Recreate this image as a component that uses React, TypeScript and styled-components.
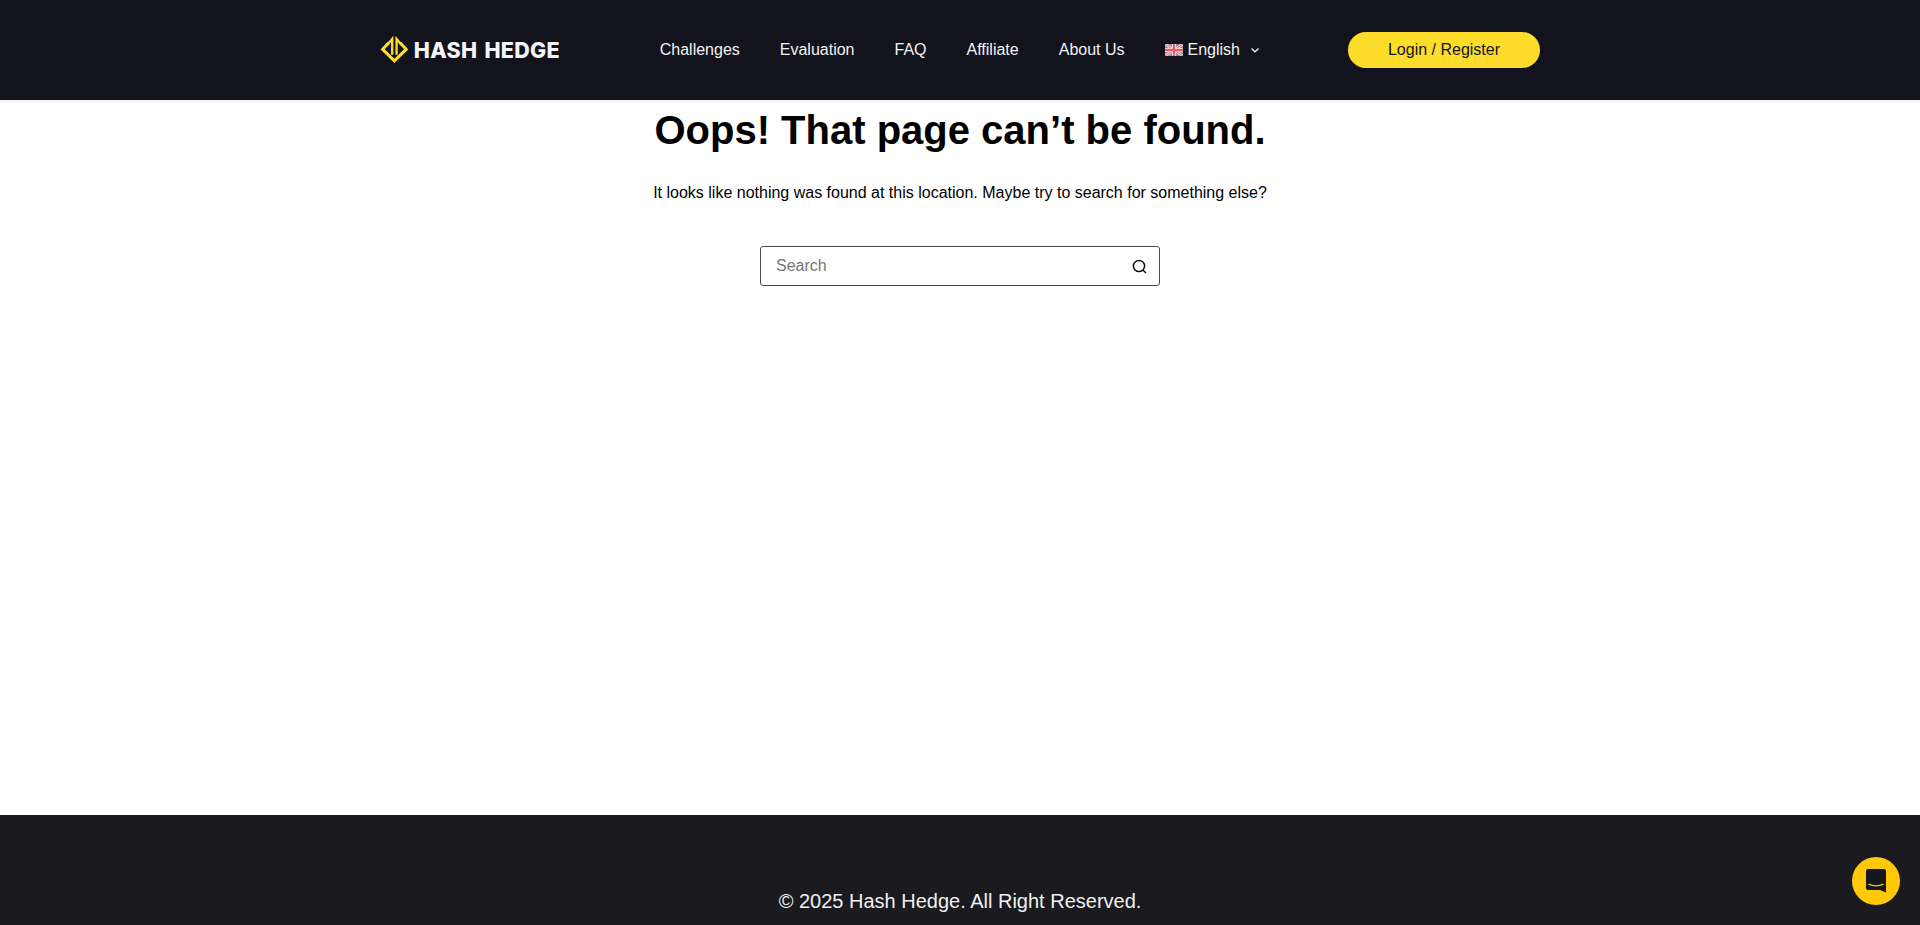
import React from "react";
import styled, { createGlobalStyle } from "styled-components";

const Global = createGlobalStyle`
  html, body { margin: 0; padding: 0; background: #fff; overflow: hidden; height: 925px; }
  body { font-family: "Liberation Sans", Arial, sans-serif; font-size: 16px; color: #000; }
`;
const Page = styled.div`
  display: flex;
  flex-direction: column;
  height: 925px;
  overflow: hidden;
`;
const Header = styled.header`
  flex: none;
  height: 100px;
  background: #13131d;
  box-shadow: 0 2px 2px rgba(0, 0, 0, 0.06);
  position: relative;
  z-index: 1;
  display: flex;
  justify-content: center;
`;
const HeaderInner = styled.div`
  width: 1160px;
  display: flex;
  align-items: center;
  justify-content: space-between;
`;
const Logo = styled.a`
  display: flex;
  align-items: center;
  gap: 5px;
  width: 180px;
`;
const LogoText = styled.span`
  font-family: Inter, "Liberation Sans", sans-serif;
  font-weight: 800;
  font-size: 21.5px;
  letter-spacing: 0.3px;
  word-spacing: 2px;
  color: #f4f4f4;
  white-space: nowrap;
  line-height: 1;
  padding-top: 1px;
`;
const Right = styled.div`
  display: flex;
  align-items: center;
  gap: 88px;
`;
const Nav = styled.nav`
  display: flex;
  align-items: center;
  gap: 40px;
`;
const NavLink = styled.a`
  color: #f2f2f2;
  font-size: 16px;
  line-height: 24px;
  white-space: nowrap;
`;
const Lang = styled.div`
  display: flex;
  align-items: center;
  color: #f2f2f2;
  font-size: 16px;
  line-height: 24px;
`;
const Flag = styled.svg`
  width: 18px;
  height: 12px;
  margin-right: 5px;
`;
const Chevron = styled.svg`
  width: 10px;
  height: 10px;
  margin-left: 10px;
`;
const LoginButton = styled.a`
  width: 192px;
  height: 36px;
  border-radius: 18px;
  background: #fedd2a;
  color: #13131d;
  display: flex;
  align-items: center;
  justify-content: center;
  font-size: 16px;
`;
const Main = styled.main`
  flex: none;
  height: 715px;
  display: flex;
  flex-direction: column;
  align-items: center;
`;
const Title = styled.h1`
  margin: 0;
  padding-top: 4px;
  font-size: 40px;
  line-height: 52px;
  font-weight: 700;
  color: #000;
`;
const Lead = styled.p`
  margin: 25px 0 0;
  font-size: 16px;
  line-height: 24px;
  color: #000;
`;
const SearchForm = styled.form`
  margin-top: 41px;
  width: 400px;
  height: 40px;
  box-sizing: border-box;
  border: 1px solid #4a4a4f;
  border-radius: 3px;
  display: flex;
  align-items: center;
  padding: 0 12px 0 15px;
`;
const SearchInput = styled.input`
  flex: 1;
  border: 0;
  outline: 0;
  padding: 0;
  background: transparent;
  font: 16px "Liberation Sans", Arial, sans-serif;
  color: #333;
  &::placeholder { color: #757575; opacity: 1; }
`;
const SearchIcon = styled.svg`
  width: 15px;
  height: 15px;
  flex: none;
  margin-top: 1px;
`;
const Footer = styled.footer`
  flex: 1;
  background: #1a1a1f;
  display: flex;
  justify-content: center;
  padding-top: 72px;
`;
const Copy = styled.p`
  margin: 0;
  color: #f0f0f0;
  font-size: 20px;
  line-height: 28px;
`;
const Chat = styled.button`
  position: fixed;
  right: 20px;
  bottom: 20px;
  width: 48px;
  height: 48px;
  border: 0;
  padding: 0;
  border-radius: 50%;
  background: #ffc808;
  display: flex;
  align-items: center;
  justify-content: center;
  z-index: 2;
`;
const ChatIcon = styled.svg`
  width: 20px;
  height: 24px;
`;

export default function App() {
  return (
    <Page>
      <Global />
      <Header>
        <HeaderInner>
          <Logo>
            <svg width="30" height="30" viewBox="0 0 30 30" fill="none">
              <path d="M9 7.5 2.800 14.300 15 26.300 27.200 14.300 21 7.500" stroke="#fedd2a" strokeWidth="3.2" />
              <path d="M12.700 20V3.500L7.700 9.500M17.300 20V3.500L22.300 9.500" stroke="#fedd2a" strokeWidth="2.400" />
            </svg>
            <LogoText>HASH HEDGE</LogoText>
          </Logo>
          <Right>
            <Nav>
              <NavLink>Challenges</NavLink>
              <NavLink>Evaluation</NavLink>
              <NavLink>FAQ</NavLink>
              <NavLink>Affiliate</NavLink>
              <NavLink>About Us</NavLink>
              <Lang>
                <Flag viewBox="0 0 18 12">
                  <rect width="18" height="12" fill="#8a8a95" />
                  <path d="M0 0 18 12M18 0 0 12" stroke="#eee" strokeWidth="2.4" />
                  <path d="M0 0 18 12M18 0 0 12" stroke="#f0596b" strokeWidth="1" />
                  <path d="M9 0v12M0 6h18" stroke="#eee" strokeWidth="4" />
                  <path d="M9 0v12M0 6h18" stroke="#f0596b" strokeWidth="2.4" />
                </Flag>
                English
                <Chevron viewBox="0 0 10 10" fill="none">
                  <path d="M1.5 3.5 5 6.8 8.5 3.5" stroke="#f2f2f2" strokeWidth="1.3" />
                </Chevron>
              </Lang>
            </Nav>
            <LoginButton>Login / Register</LoginButton>
          </Right>
        </HeaderInner>
      </Header>
      <Main>
        <Title>Oops! That page can’t be found.</Title>
        <Lead>It looks like nothing was found at this location. Maybe try to search for something else?</Lead>
        <SearchForm>
          <SearchInput placeholder="Search" />
          <SearchIcon viewBox="0 0 15 15" fill="none">
            <circle cx="7" cy="7" r="5.6" stroke="#111" strokeWidth="1.5" />
            <path d="M11 11l3 3" stroke="#111" strokeWidth="1.5" />
          </SearchIcon>
        </SearchForm>
      </Main>
      <Footer>
        <Copy>© 2025 Hash Hedge. All Right Reserved.</Copy>
      </Footer>
      <Chat>
        <ChatIcon viewBox="0 0 20 24">
          <path d="M2 0h16a2 2 0 0 1 2 2v21.5L14 21H2a2 2 0 0 1-2-2V2a2 2 0 0 1 2-2Z" fill="#16161e" />
          <path d="M2.5 15.2c4.5 2 10.500 2 15 0" stroke="#ffc808" strokeWidth="1.3" fill="none" />
        </ChatIcon>
      </Chat>
    </Page>
  );
}
